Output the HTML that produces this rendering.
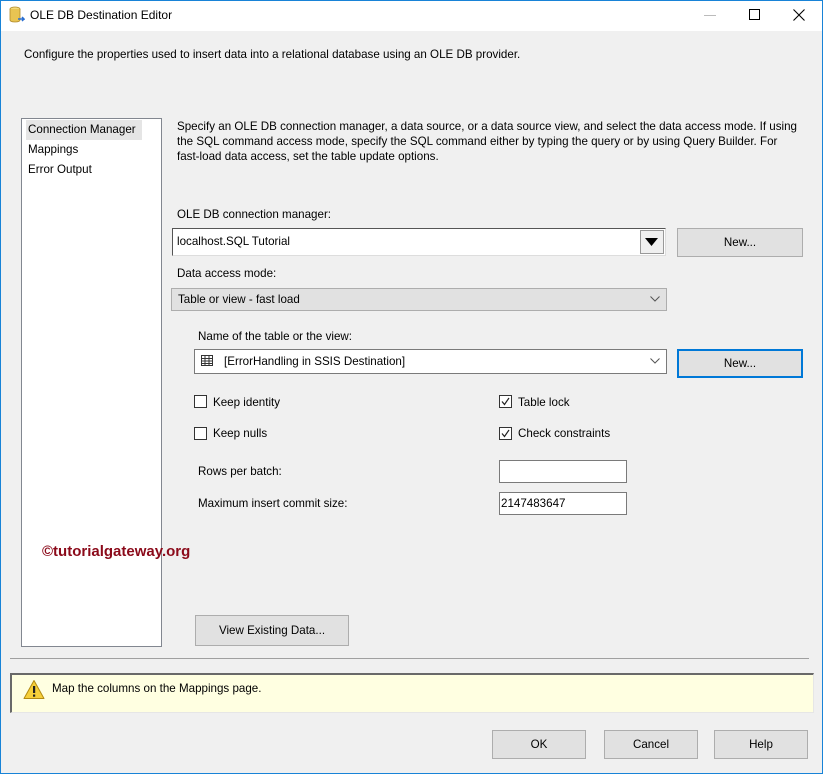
<!DOCTYPE html>
<html><head><meta charset="utf-8"><style>
*{margin:0;padding:0;box-sizing:border-box}
body{width:823px;height:774px;overflow:hidden;background:#f0f0f0;font-family:"Liberation Sans",sans-serif;font-size:11.6px;color:#000;position:relative}
.a{position:absolute}
.t{position:absolute;white-space:nowrap;line-height:15px}
.btn{position:absolute;background:#e1e1e1;border:1px solid #adadad;text-align:center;font-size:11.6px}
.cb{position:absolute;width:13px;height:13px;border:1px solid #333;background:#fff}
.inp{position:absolute;background:#fff;border:1px solid #7a7a7a}
</style></head><body>
<div class="a" style="left:0;top:0;width:823px;height:774px;border:1px solid #1883d7"></div>
<div class="a" style="left:1px;top:1px;width:821px;height:30px;background:#fff"></div>
<svg class="a" style="left:9px;top:6px" width="16" height="18" viewBox="0 0 16 18"><ellipse cx="6" cy="3" rx="5" ry="2" fill="#f3d97a" stroke="#b08a2a" stroke-width=".8"/><path d="M1 3v11c0 1.2 2.2 2 5 2s5-.8 5-2V3" fill="#e8c452" stroke="#b08a2a" stroke-width=".8"/><path d="M9 13h6l-2-2M15 13l-2 2" stroke="#2a6fd1" stroke-width="1.5" fill="none"/></svg>
<div class="t" style="left:30px;top:8px;font-size:12px">OLE DB Destination Editor</div>
<div class="a" style="left:704px;top:15px;width:12px;height:1px;background:#bbb"></div>
<div class="a" style="left:749px;top:9px;width:11px;height:11px;border:1px solid #000"></div>
<svg class="a" style="left:793px;top:9px" width="12" height="12"><path d="M0.5 .5L11.5 11.5M11.5 .5L.5 11.5" stroke="#000" stroke-width="1.1"/></svg>
<div class="t" style="left:24px;top:47px">Configure the properties used to insert data into a relational database using an OLE DB provider.</div>

<div class="a" style="left:21px;top:118px;width:141px;height:529px;background:#fff;border:1px solid #828790"></div>
<div class="a" style="left:26px;top:120px;width:116px;height:20px;background:#e5e5e5"></div>
<div class="t" style="left:28px;top:122px">Connection Manager</div>
<div class="t" style="left:28px;top:142px">Mappings</div>
<div class="t" style="left:28px;top:162px">Error Output</div>
<div class="t" style="left:42px;top:544px;font-weight:bold;font-size:15px;color:#8b0a1a">©tutorialgateway.org</div>

<div class="t" style="left:177px;top:119px">Specify an OLE DB connection manager, a data source, or a data source view, and select the data access mode. If using</div>
<div class="t" style="left:177px;top:134px">the SQL command access mode, specify the SQL command either by typing the query or by using Query Builder. For</div>
<div class="t" style="left:177px;top:149px">fast-load data access, set the table update options.</div>

<div class="t" style="left:177px;top:207px">OLE DB connection manager:</div>
<div class="a" style="left:172px;top:228px;width:494px;height:28px;background:#fff;border:1px solid #555;border-bottom-color:#ddd;border-right-color:#ddd"></div>
<div class="t" style="left:177px;top:234px">localhost.SQL Tutorial</div>
<div class="a" style="left:640px;top:230px;width:24px;height:24px;background:#f0f0f0;border:1px solid #999"></div>
<svg class="a" style="left:645px;top:238px" width="13" height="8"><path d="M0 0h13L6.5 8z" fill="#000"/></svg>
<div class="btn" style="left:677px;top:228px;width:126px;height:29px;line-height:27px">New...</div>

<div class="t" style="left:177px;top:266px">Data access mode:</div>
<div class="a" style="left:171px;top:288px;width:496px;height:23px;background:#e1e1e1;border:1px solid #adadad"></div>
<div class="t" style="left:178px;top:292px">Table or view - fast load</div>
<svg class="a" style="left:650px;top:296px" width="10" height="6"><path d="M.5 .5L5 5 9.5 .5" stroke="#555" fill="none"/></svg>

<div class="t" style="left:198px;top:329px">Name of the table or the view:</div>
<div class="a" style="left:194px;top:349px;width:473px;height:25px;background:#fff;border:1px solid #7a7a7a"></div>
<svg class="a" style="left:201px;top:355px" width="12" height="11"><rect x=".5" y=".5" width="11" height="10" fill="#fff" stroke="#333"/><path d="M.5 3.5h11M.5 6h11M.5 8.5h11M4 .5v10M8 .5v10" stroke="#333"/></svg>
<div class="t" style="left:224px;top:354px">[ErrorHandling in SSIS Destination]</div>
<svg class="a" style="left:650px;top:358px" width="10" height="6"><path d="M.5 .5L5 5 9.5 .5" stroke="#555" fill="none"/></svg>
<div class="btn" style="left:677px;top:349px;width:126px;height:29px;line-height:25px;border:2px solid #0078d7">New...</div>

<div class="cb" style="left:194px;top:395px"></div><div class="t" style="left:213px;top:395px">Keep identity</div>
<div class="cb" style="left:194px;top:427px"></div><div class="t" style="left:213px;top:426px">Keep nulls</div>
<div class="cb" style="left:499px;top:395px"></div><svg class="a" style="left:500px;top:396px" width="11" height="11"><path d="M2 5.5l2.5 3L9 2" stroke="#222" fill="none" stroke-width="1.2"/></svg><div class="t" style="left:518px;top:395px">Table lock</div>
<div class="cb" style="left:499px;top:427px"></div><svg class="a" style="left:500px;top:428px" width="11" height="11"><path d="M2 5.5l2.5 3L9 2" stroke="#222" fill="none" stroke-width="1.2"/></svg><div class="t" style="left:518px;top:426px">Check constraints</div>

<div class="t" style="left:198px;top:464px">Rows per batch:</div>
<div class="inp" style="left:499px;top:460px;width:128px;height:23px"></div>
<div class="t" style="left:198px;top:496px">Maximum insert commit size:</div>
<div class="inp" style="left:499px;top:492px;width:128px;height:23px"></div>
<div class="t" style="left:501px;top:496px">2147483647</div>

<div class="btn" style="left:195px;top:615px;width:154px;height:31px;line-height:29px">View Existing Data...</div>
<div class="a" style="left:10px;top:658px;width:799px;height:1px;background:#a0a0a0"></div>
<div class="a" style="left:10px;top:673px;width:804px;height:40px;background:#ffffe1;border:1px solid #e6e6e6;border-top:2px solid #696969;border-left:2px solid #696969"></div>
<svg class="a" style="left:23px;top:679px" width="22" height="21"><path d="M11 1.5L21 19.5H1z" fill="#f6cf3a" stroke="#b38a10" stroke-linejoin="round"/><rect x="10" y="7" width="2.2" height="7" fill="#222"/><rect x="10" y="15.5" width="2.2" height="2.2" fill="#222"/></svg>
<div class="t" style="left:52px;top:681px">Map the columns on the Mappings page.</div>

<div class="btn" style="left:492px;top:730px;width:94px;height:29px;line-height:27px">OK</div>
<div class="btn" style="left:604px;top:730px;width:94px;height:29px;line-height:27px">Cancel</div>
<div class="btn" style="left:714px;top:730px;width:94px;height:29px;line-height:27px">Help</div>
</body></html>
